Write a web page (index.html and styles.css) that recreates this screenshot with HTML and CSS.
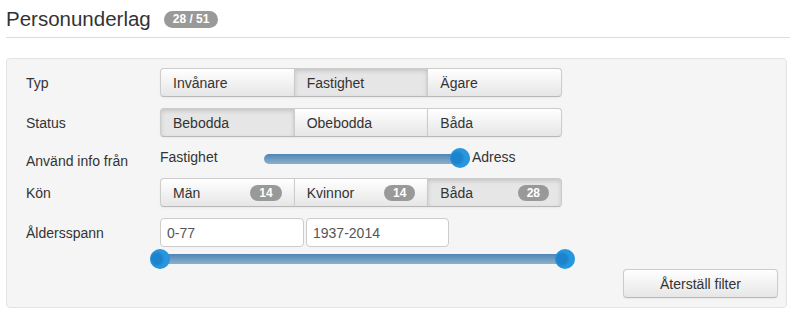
FILE: index.html
```html
<!DOCTYPE html>
<html lang="sv">
    <head>
        <meta charset="UTF-8" />
        <meta name="viewport" content="width=device-width, initial-scale=1.0" />
        <title>Personunderlag</title>
        <link rel="stylesheet" href="styles.css">
    </head>
    <body>
        <div class="page">
            <div class="page-header">
                <h1>Personunderlag</h1>
                <span class="count">28 / 51</span>
            </div>

            <div class="filters">
                <div class="row">
                    <label class="row-label">Typ</label>
                    <div class="btn-group">
                        <button class="btn">Invånare</button>
                        <button class="btn active">Fastighet</button>
                        <button class="btn">Ägare</button>
                    </div>
                </div>

                <div class="row">
                    <label class="row-label">Status</label>
                    <div class="btn-group">
                        <button class="btn active">Bebodda</button>
                        <button class="btn">Obebodda</button>
                        <button class="btn">Båda</button>
                    </div>
                </div>

                <div class="row row-slider">
                    <label class="row-label">Använd info från</label>
                    <div class="source">
                        <span class="source-from">Fastighet</span>
                        <div class="slider">
                            <div class="track"></div>
                            <span class="thumb thumb-end"></span>
                        </div>
                        <span class="source-to">Adress</span>
                    </div>
                </div>

                <div class="row row-gender">
                    <label class="row-label">Kön</label>
                    <div class="btn-group">
                        <button class="btn">Män <span class="badge">14</span></button>
                        <button class="btn">Kvinnor <span class="badge">14</span></button>
                        <button class="btn active">Båda <span class="badge">28</span></button>
                    </div>
                </div>

                <div class="row row-age">
                    <label class="row-label">Åldersspann</label>
                    <div class="age">
                        <div class="age-inputs">
                            <input type="text" class="age-input" value="0-77" />
                            <input type="text" class="age-input age-years" value="1937-2014" />
                        </div>
                        <div class="range">
                            <div class="track"></div>
                            <span class="thumb thumb-start"></span>
                            <span class="thumb thumb-end"></span>
                        </div>
                    </div>
                </div>

                <div class="actions">
                    <button class="btn btn-reset">Återställ filter</button>
                </div>
            </div>
        </div>
    </body>
</html>
```

FILE: styles.css
```css
body {
    font-family: "Liberation Sans", Arial, sans-serif;
    font-size: 14px;
    color: #333;
    margin: 0;
    padding: 0;
    background-color: #fff;
}

.page {
    padding: 4px 2px 0 6px;
}

.page-header {
    display: flex;
    align-items: center;
    gap: 13px;
    padding-bottom: 3px;
    border-bottom: 1px solid #dcdcdc;
}

.page-header h1 {
    margin: 0;
    font-size: 20.5px;
    font-weight: normal;
    line-height: 30px;
    color: #333;
}

.count {
    display: inline-block;
    height: 17px;
    line-height: 17px;
    padding: 0 9px;
    border-radius: 9px;
    background-color: #999;
    color: #fff;
    font-size: 12px;
    font-weight: bold;
}

.filters {
    margin: 20px 3px 0 0;
    padding: 9px 8px 9px 19px;
    background-color: #f5f5f5;
    border: 1px solid #e3e3e3;
    border-radius: 4px;
}

.row {
    display: flex;
    align-items: center;
    margin-bottom: 11px;
}

.row-label {
    width: 134px;
    flex-shrink: 0;
    line-height: 20px;
}

.btn-group {
    display: flex;
    width: 402px;
}

.btn {
    font-family: inherit;
    font-size: 14px;
    color: #333;
    height: 29px;
    padding: 0 12px;
    text-align: left;
    background-color: #f5f5f5;
    background-image: linear-gradient(to bottom, #fff, #e6e6e6);
    border: 1px solid #ccc;
    border-bottom-color: #b8b8b8;
    cursor: pointer;
    box-shadow: inset 0 1px 0 rgba(255, 255, 255, 0.2), 0 1px 2px rgba(0, 0, 0, 0.05);
}

.btn-group .btn {
    flex: 1;
    display: flex;
    align-items: center;
    justify-content: space-between;
    border-radius: 0;
    margin-left: -1px;
}

.btn-group .btn:first-child {
    margin-left: 0;
    border-radius: 4px 0 0 4px;
}

.btn-group .btn:last-child {
    border-radius: 0 4px 4px 0;
}

.btn.active {
    background-image: none;
    background-color: #e6e6e6;
    box-shadow: inset 0 2px 4px rgba(0, 0, 0, 0.15), 0 1px 2px rgba(0, 0, 0, 0.05);
}

.badge {
    display: inline-block;
    height: 16px;
    line-height: 16px;
    padding: 0 9px;
    border-radius: 8px;
    background-color: #999;
    color: #fff;
    font-size: 12px;
    font-weight: bold;
}

.row-slider {
    align-items: flex-start;
    height: 20px;
    margin-bottom: 10px;
}

.row-slider .row-label {
    padding-top: 3px;
}

.source {
    display: flex;
    align-items: center;
    height: 20px;
}

.source-from {
    width: 104px;
    margin-top: -2px;
}

.source-to {
    margin: -2px 0 0 2px;
}

.slider {
    position: relative;
    width: 206px;
    height: 20px;
}

.track {
    position: absolute;
    left: 0;
    right: 0;
    top: 6px;
    height: 10px;
    border-radius: 5px;
    background-image: linear-gradient(to bottom, #4e86b6, #8cb0cb);
}

.thumb {
    position: absolute;
    top: 0;
    width: 20px;
    height: 20px;
    border-radius: 50%;
    background-color: #2492dd;
    background-image: radial-gradient(circle at 35% 50%, #1c84cc 0, #1c84cc 5px, #2896df 8px);
}

.thumb-end {
    right: 0;
}

.thumb-start {
    left: 0;
}

.row-age {
    align-items: flex-start;
    margin-bottom: 0;
}

.row-age .row-label {
    padding-top: 5px;
}

.age-inputs {
    display: flex;
    gap: 2px;
}

.age-input {
    box-sizing: border-box;
    width: 144px;
    height: 29px;
    padding: 0 6px;
    font-family: inherit;
    font-size: 14px;
    color: #555;
    background-color: #fff;
    border: 1px solid #ccc;
    border-radius: 4px;
}

.age-years {
    width: 143px;
}

.range {
    position: relative;
    width: 425px;
    height: 20px;
    margin: 2px 0 0 -10px;
}

.range .track {
    left: 10px;
    right: 10px;
    top: 5px;
}

.actions {
    display: flex;
    justify-content: flex-end;
}

.btn-reset {
    width: 155px;
    text-align: center;
    border-radius: 4px;
}
```
